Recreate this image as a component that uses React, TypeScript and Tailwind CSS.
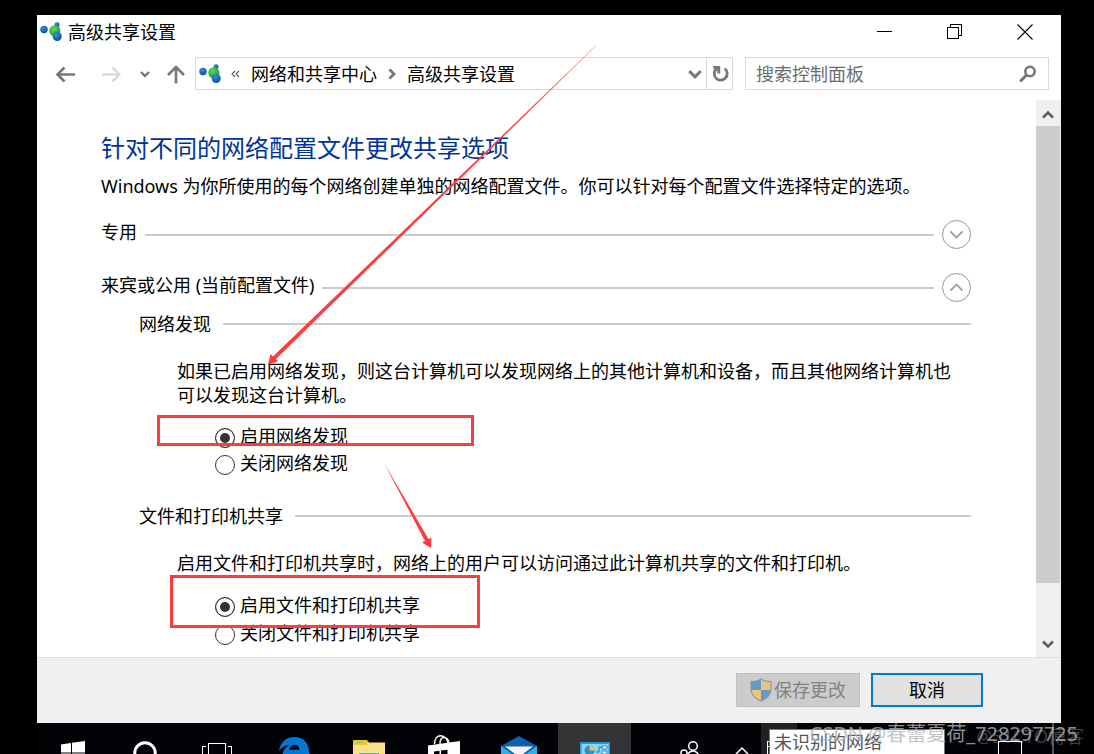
import React, { useState } from 'react';

type IconProps = { className?: string };

function NetworkIcon({ className }: IconProps) {
  return (
    <svg viewBox="0 0 22 20" className={className} aria-hidden="true">
      <defs>
        <radialGradient id="blueBall" cx="0.4" cy="0.3" r="0.7">
          <stop offset="0" stopColor="#3b8fd6" />
          <stop offset="1" stopColor="#0a4f9e" />
        </radialGradient>
        <radialGradient id="greenBall" cx="0.4" cy="0.3" r="0.7">
          <stop offset="0" stopColor="#5fd65a" />
          <stop offset="1" stopColor="#17a32c" />
        </radialGradient>
      </defs>
      <circle cx="4" cy="7.5" r="3.7" fill="url(#blueBall)" />
      <circle cx="17" cy="2.8" r="2.5" fill="url(#blueBall)" />
      <circle cx="14.8" cy="8.8" r="5.6" fill="url(#greenBall)" />
      <circle cx="17.2" cy="14.5" r="4.5" fill="url(#blueBall)" />
    </svg>
  );
}

function Chevron({ d, className }: IconProps & { d: string }) {
  return (
    <svg viewBox="0 0 14 14" className={className} fill="none" stroke="currentColor" aria-hidden="true">
      <path d={d} />
    </svg>
  );
}

const DOWN = 'M2 4.5 7 9.5 12 4.5';
const UP = 'M2 9.5 7 4.5 12 9.5';
const RIGHT = 'M4.5 2.5 9 7 4.5 11.5';

function TitleBar() {
  return (
    <header className="flex h-[34px] items-center pl-[3px] pr-7">
      <NetworkIcon className="h-5 w-[22px]" />
      <h1 className="ml-1.5 text-lg leading-6">高级共享设置</h1>
      <div className="ml-auto flex items-center gap-[54px]">
        <button type="button" aria-label="最小化">
          <svg viewBox="0 0 16 16" className="size-4" stroke="#000" shapeRendering="crispEdges">
            <path d="M0 7.5h15" />
          </svg>
        </button>
        <button type="button" aria-label="还原">
          <svg viewBox="0 0 16 16" className="size-4" fill="none" stroke="#000" shapeRendering="crispEdges">
            <path d="M.5 3.5h11v11H.5zM3.5 3.5V.5h11v11h-3" />
          </svg>
        </button>
        <button type="button" aria-label="关闭">
          <svg viewBox="0 0 16 16" className="size-4" stroke="#000" strokeWidth="1.1">
            <path d="M.5.5l15 15M15.5.5l-15 15" />
          </svg>
        </button>
      </div>
    </header>
  );
}

function NavBar() {
  return (
    <nav className="flex items-center py-2 pl-[18px] pr-3 text-lg leading-6">
      <button type="button" aria-label="后退" className="text-[#777]">
        <svg viewBox="0 0 20 20" className="size-5" fill="none" stroke="currentColor" strokeWidth="2.6">
          <path d="M20 10.5H2.5M9.500 3.500l-7 7 7 7" />
        </svg>
      </button>
      <button type="button" aria-label="前进" className="ml-[26px] text-[#dadada]">
        <svg viewBox="0 0 20 20" className="size-5" fill="none" stroke="currentColor" strokeWidth="2.6">
          <path d="M1 10.5h17M11.500 3.500l7 7-7 7" />
        </svg>
      </button>
      <button type="button" aria-label="最近浏览的位置" className="ml-[17px] text-[#777]">
        <Chevron d="M3 5 7 9 11 5" className="size-3.5 stroke-[2.4]" />
      </button>
      <button type="button" aria-label="上移" className="ml-3.5 text-[#777]">
        <svg viewBox="0 0 20 20" className="size-5" fill="none" stroke="currentColor" strokeWidth="2.6">
          <path d="M10 19.500V3M2 11l8-8 8 8" />
        </svg>
      </button>
      <div className="ml-[9px] flex h-[33px] flex-1 items-center border border-[#d9d9d9]">
        <NetworkIcon className="ml-[3px] h-5 w-[22px]" />
        <svg viewBox="0 0 10 10" className="ml-2.5 size-2.5" fill="none" stroke="#555" strokeWidth="1.1">
          <path d="M4 2 1 5l3 3M8 2 5 5l3 3" />
        </svg>
        <button type="button" className="ml-2.5">网络和共享中心</button>
        <Chevron d={RIGHT} className="ml-2 size-3.5 stroke-[2.8] text-[#777]" />
        <button type="button" className="ml-2">高级共享设置</button>
        <button type="button" aria-label="以前的位置" className="ml-auto mr-[3px] text-[#777]">
          <Chevron d={DOWN} className="size-4 stroke-[2.6]" />
        </button>
        <button
          type="button"
          aria-label="刷新"
          className="flex h-full w-[26px] items-center justify-center border-l border-[#d9d9d9]"
        >
          <svg viewBox="0 0 18 18" className="size-[18px]" fill="none" stroke="#777" strokeWidth="2.8">
            <path d="M13.700 3.500a6.500 6.500 0 1 1-7-.6" />
            <path d="M2.200 2.400h5.600v6" />
          </svg>
        </button>
      </div>
      <div className="ml-3 flex h-[33px] w-[304px] items-center border border-[#d9d9d9]">
        <input
          type="search"
          aria-label="搜索控制面板"
          placeholder="搜索控制面板"
          className="min-w-0 flex-1 pl-2.5 outline-none placeholder:text-[#6d6d6d]"
        />
        <svg viewBox="0 0 18 18" className="mr-[11px] size-[18px]" fill="none" stroke="#777">
          <circle cx="11" cy="6.500" r="4.700" strokeWidth="2.600" />
          <path d="M7.800 9.800 1.200 16.400" strokeWidth="3" />
        </svg>
      </div>
    </nav>
  );
}

function ProfileRow({ title, open }: { title: string; open: boolean }) {
  return (
    <div className="flex items-start gap-2">
      <h3 className="leading-6">{title}</h3>
      <div className="mt-3.5 h-0.5 flex-1 bg-[#ccc]" />
      <button
        type="button"
        aria-label={title}
        aria-expanded={open}
        className="flex size-[29px] items-center justify-center rounded-full border border-[#999] text-[#999]"
      >
        <Chevron d={open ? UP : DOWN} className="size-[17px] stroke-[1.4]" />
      </button>
    </div>
  );
}

function SectionTitle({ children }: { children: React.ReactNode }) {
  return (
    <div className="flex items-center gap-3">
      <h4 className="leading-6">{children}</h4>
      <div className="h-0.5 flex-1 bg-[#ccc]" />
    </div>
  );
}

type RadioRowProps = {
  name: string;
  label: string;
  checked: boolean;
  onChange: () => void;
};

function RadioRow({ name, label, checked, onChange }: RadioRowProps) {
  return (
    <label className="flex w-fit items-end gap-[5px] leading-6">
      <input
        type="radio"
        name={name}
        checked={checked}
        onChange={onChange}
        className="size-5 appearance-none rounded-full border border-[#333] bg-white checked:bg-[#333] checked:shadow-[inset_0_0_0_4px_white]"
      />
      {label}
    </label>
  );
}

function Settings() {
  const [discovery, setDiscovery] = useState(true);
  const [sharing, setSharing] = useState(true);

  return (
    <main className="min-w-0 flex-1 overflow-hidden pl-16 pr-[65px] pt-[30px] text-lg">
      <h2 className="text-2xl leading-9 text-[#003399]">针对不同的网络配置文件更改共享选项</h2>
      <p className="mt-2 leading-6">
        Windows 为你所使用的每个网络创建单独的网络配置文件。你可以针对每个配置文件选择特定的选项。
      </p>
      <div className="mt-[22px] flex flex-col gap-6">
        <ProfileRow title="专用" open={false} />
        <ProfileRow title="来宾或公用 (当前配置文件)" open />
      </div>

      <section className="mt-2.5 pl-[38px]">
        <SectionTitle>网络发现</SectionTitle>
        <div className="mt-[23px] pl-[38px]">
          <p className="pr-4 leading-6">
            如果已启用网络发现，则这台计算机可以发现网络上的其他计算机和设备，而且其他网络计算机也可以发现这台计算机。
          </p>
          <div className="relative mt-[17px] flex flex-col gap-[3px] pl-[38px]">
            <RadioRow name="discovery" label="启用网络发现" checked={discovery} onChange={() => setDiscovery(true)} />
            <RadioRow name="discovery" label="关闭网络发现" checked={!discovery} onChange={() => setDiscovery(false)} />
            <div className="pointer-events-none absolute -left-5 -top-[9px] h-[31px] w-[317px] border-[3px] border-[#ff3b3b]" />
          </div>
        </div>
      </section>

      <section className="mt-[29px] pl-[38px]">
        <SectionTitle>文件和打印机共享</SectionTitle>
        <div className="mt-[23px] pl-[38px]">
          <p className="leading-6">启用文件和打印机共享时，网络上的用户可以访问通过此计算机共享的文件和打印机。</p>
          <div className="relative mt-[18px] flex flex-col gap-1 pl-[38px]">
            <RadioRow name="sharing" label="启用文件和打印机共享" checked={sharing} onChange={() => setSharing(true)} />
            <RadioRow name="sharing" label="关闭文件和打印机共享" checked={!sharing} onChange={() => setSharing(false)} />
            <div className="pointer-events-none absolute -left-[7px] -top-[18px] h-[53px] w-[310px] border-[3px] border-[#ff3b3b]" />
          </div>
        </div>
      </section>
    </main>
  );
}

function ScrollBar() {
  return (
    <div className="flex w-[25px] flex-col bg-[#f0f0f0] text-[#606060]">
      <button type="button" aria-label="向上滚动" className="flex h-[26px] items-center justify-center pr-px pt-1">
        <Chevron d={UP} className="size-3.5 stroke-[2.6]" />
      </button>
      <div className="mr-px h-[457px] bg-[#cdcdcd]" />
      <button type="button" aria-label="向下滚动" className="mt-auto flex h-[26px] items-center justify-center pr-px">
        <Chevron d={DOWN} className="size-3.5 stroke-[2.6]" />
      </button>
    </div>
  );
}

function Shield() {
  return (
    <svg viewBox="0 0 22 24" className="h-6 w-[22px]" aria-hidden="true">
      <defs>
        <clipPath id="shieldClip">
          <path d="M11 1C8 3 4.500 3.600 1 3.600V11c0 5.500 4 9.500 10 12.200C17 20.500 21 16.500 21 11V3.600C17.500 3.600 14 3 11 1z" />
        </clipPath>
      </defs>
      <g clipPath="url(#shieldClip)">
        <path d="M0 0h11v12H0zM11 12h11v12H11z" fill="#6499cb" />
        <path d="M11 0h11v12H11zM0 12h11v12H0z" fill="#e9c57a" />
      </g>
      <path
        d="M11 1C8 3 4.500 3.600 1 3.600V11c0 5.500 4 9.500 10 12.200C17 20.500 21 16.500 21 11V3.600C17.500 3.600 14 3 11 1z"
        fill="none"
        stroke="#909aa0"
        strokeWidth="1.2"
      />
    </svg>
  );
}

function Footer() {
  return (
    <footer className="flex justify-end gap-[11px] border-t border-[#dfdfdf] bg-[#f0f0f0] pb-4 pr-[78px] pt-[15px] text-lg leading-6">
      <button
        type="button"
        disabled
        className="flex h-[34px] w-[124px] items-center justify-center gap-0.5 border border-[#bfbfbf] bg-[#ccc] text-[#838383]"
      >
        <Shield />
        保存更改
      </button>
      <button type="button" className="h-[34px] w-28 border-2 border-[#0078d7] bg-[#e1e1e1]">
        取消
      </button>
    </footer>
  );
}

function TaskBar() {
  return (
    <div className="relative flex h-[31px] items-start overflow-hidden bg-[#010307]">
      <button type="button" aria-label="开始" className="flex w-[72px] justify-center pt-[18px]">
        <svg viewBox="0 0 24 24" className="size-6 shrink-0" fill="#fff">
          <path d="M0 3.400 10 2v9.500H0zM11 1.800 24 0v11.500H11zM0 12.500h10V22L0 20.600zM11 12.500h13V24l-13-1.800z" />
        </svg>
      </button>
      <button type="button" aria-label="Cortana" className="flex w-[72px] justify-center pt-[18px]">
        <svg viewBox="0 0 24 24" className="size-6 shrink-0" fill="none" stroke="#fff" strokeWidth="3">
          <circle cx="12" cy="12" r="10.2" />
        </svg>
      </button>
      <button type="button" aria-label="任务视图" className="flex w-[72px] justify-center pt-5">
        <svg viewBox="0 0 30 24" className="h-6 w-[30px] shrink-0" fill="none" stroke="#fff" shapeRendering="crispEdges">
          <path d="M6.500.5h17v20h-17zM4 3.500H.5v16H4M26 3.500h3.500v16H26" />
        </svg>
      </button>
      <button type="button" aria-label="Microsoft Edge" className="ml-[3px] flex w-[75px] justify-center pt-3.5">
        <svg viewBox="0 0 30 32" className="h-8 w-[30px] shrink-0" fill="#0078d7">
          <path d="M0 14C1.500 5 7 0 15.500 0 25 0 30 7 30 14.500V18H10c.3 5 4.500 7.500 9 7.500 3.500 0 6-.9 8.500-2.300V30C25 31.300 22 32 18.500 32 9 32 3.500 27 3.500 19c0-5 3-9 7.500-11.200C6.500 8 3 10 0 14zm10.200-1.200h10C20.200 9.500 18.500 7.800 15.500 7.800s-4.900 2-5.300 5z" />
        </svg>
      </button>
      <button type="button" aria-label="文件资源管理器" className="flex w-[75px] justify-center pt-[17px]">
        <svg viewBox="0 0 32 26" className="h-[26px] w-8 shrink-0">
          <path d="M0 1.500Q0 0 1.500 0h12L16 2.500h16V26H0z" fill="#fbe08a" />
          <path d="M0 1.500Q0 0 1.500 0h12l2 2-2 3H0z" fill="#f5c622" />
          <path d="M3 2h7" stroke="#6fc5e8" strokeWidth="1.500" />
          <path d="M6 13h20v13H6z" fill="#45b0e0" />
        </svg>
      </button>
      <button type="button" aria-label="应用商店" className="flex w-[75px] justify-center pt-3">
        <svg viewBox="0 0 32 34" className="h-[34px] w-8 shrink-0">
          <path d="M6.500 9C6.500 3 9.500.8 12.500.8S19 3 20 8M12 9c0-5 1.500-6.500 4-6.500S20.500 5 21 8" fill="none" stroke="#fff" strokeWidth="1.400" />
          <path d="M0 10.500 32 6v28H0z" fill="#fff" />
          <path d="M6 16.500l5.500-.7V22H6zM13 15.600l6.500-.9V22H13z" fill="#010307" />
        </svg>
      </button>
      <button type="button" aria-label="邮件" className="flex w-[75px] justify-center pt-[13px]">
        <svg viewBox="0 0 36 30" className="h-[30px] w-9 shrink-0">
          <path d="M0 10 18 0l18 10v20H0z" fill="#0f5faf" />
          <path d="M0 10 18 23 36 10v20H0z" fill="#2fb0ea" />
          <path d="M4 10.500h28L18 21z" fill="#f3f3f3" />
        </svg>
      </button>
      <button type="button" aria-label="控制面板" className="ml-0.5 flex h-full w-[73px] justify-center bg-[#323436] pt-[19px]">
        <svg viewBox="0 0 30 24" className="h-6 w-[30px] shrink-0">
          <path d="M0 0h30v24H0z" fill="#1a9bd8" />
          <path d="M1.500 2h27v22h-27z" fill="#8bd6f6" />
          <circle cx="9.500" cy="8.500" r="5" fill="#2b8fd0" />
          <path d="M9.500 8.500V3.500a5 5 0 0 1 5 5z" fill="#ffc13b" />
          <path d="M16 10h3V5h3" fill="none" stroke="#1478b8" />
          <path d="M22 4h5v3h-5zM22 9h5v3h-5z" fill="#e6f7ff" stroke="#1478b8" strokeWidth=".8" />
        </svg>
      </button>
      <button type="button" aria-label="人脉" className="ml-12 pt-[18px]">
        <svg viewBox="0 0 22 22" className="size-[22px]" fill="none" stroke="#fff" strokeWidth="1.500">
          <circle cx="14" cy="5" r="4.300" />
          <circle cx="5" cy="12" r="3" />
          <path d="M8 17c0-4 2.500-7 6-7s6 3 6 7" />
        </svg>
      </button>
      <button type="button" aria-label="显示隐藏的图标" className="ml-[34px] pt-5 text-white">
        <Chevron d="M1 11 7 5l6 6" className="size-3.5 stroke-[1.5]" />
      </button>
      <div className="ml-3 h-full w-9 bg-[#202122] pl-1.5 pt-[18px]">
        <svg viewBox="0 0 20 16" className="h-4 w-5" fill="none" stroke="#fff" shapeRendering="crispEdges">
          <path d="M.5.5h19v15H.5zM0 5.500h4" />
        </svg>
      </div>
      <svg viewBox="0 0 24 20" className="ml-auto mr-[30px] mt-[18px] h-5 w-6" fill="none" stroke="#fff" shapeRendering="crispEdges">
        <path d="M.5.5h23v16H.5z" />
      </svg>
      <div className="mr-[7px] h-full w-0.5 bg-[#54565a]" />
      <div
        role="tooltip"
        className="absolute right-[116px] top-1.5 h-10 w-44 border border-[#767676] bg-white pl-1 text-lg leading-6 text-[#575757]"
      >
        未识别的网络
      </div>
    </div>
  );
}

// hand drawn pointers that lead from step to step
function Arrows() {
  return (
    <svg viewBox="0 0 1094 754" className="pointer-events-none absolute left-0 top-0 h-[754px] w-[1094px]" aria-hidden="true">
      <defs>
        <linearGradient id="fadeLong" gradientUnits="userSpaceOnUse" x1="596" y1="46" x2="530" y2="110">
          <stop offset="0" stopColor="#ff3b3b" stopOpacity="0.4" />
          <stop offset="1" stopColor="#ff3b3b" />
        </linearGradient>
      </defs>
      <path d="M596 46 276 359 278 361.500 268 364.500 270.500 354 273 356.500 595.500 45.500z" fill="url(#fadeLong)" />
      <path d="M384 463 428.500 539 431.500 537.500 431 548 422 542.500 425 541z" fill="#ff3b3b" />
    </svg>
  );
}

export default function App() {
  return (
    <div className='relative flex h-screen flex-col overflow-hidden bg-black pl-[37px] pr-[33px] pt-[15px] font-["Noto_Sans","Noto_Sans_CJK_SC",sans-serif] text-black'>
      <div className="flex min-h-0 flex-1 flex-col bg-white">
        <TitleBar />
        <NavBar />
        <div className="mt-0.5 flex min-h-0 flex-1">
          <Settings />
          <ScrollBar />
        </div>
        <Footer />
      </div>
      <TaskBar />
      <Arrows />
      <span className="pointer-events-none absolute bottom-1.5 right-2.5 text-lg leading-6 text-white/25">@51CTO博客</span>
      <span className="pointer-events-none absolute bottom-1.5 right-4 text-xl leading-7 text-[#b4b4b4]/80">
        CSDN @春蕾夏荷_728297725
      </span>
    </div>
  );
}
